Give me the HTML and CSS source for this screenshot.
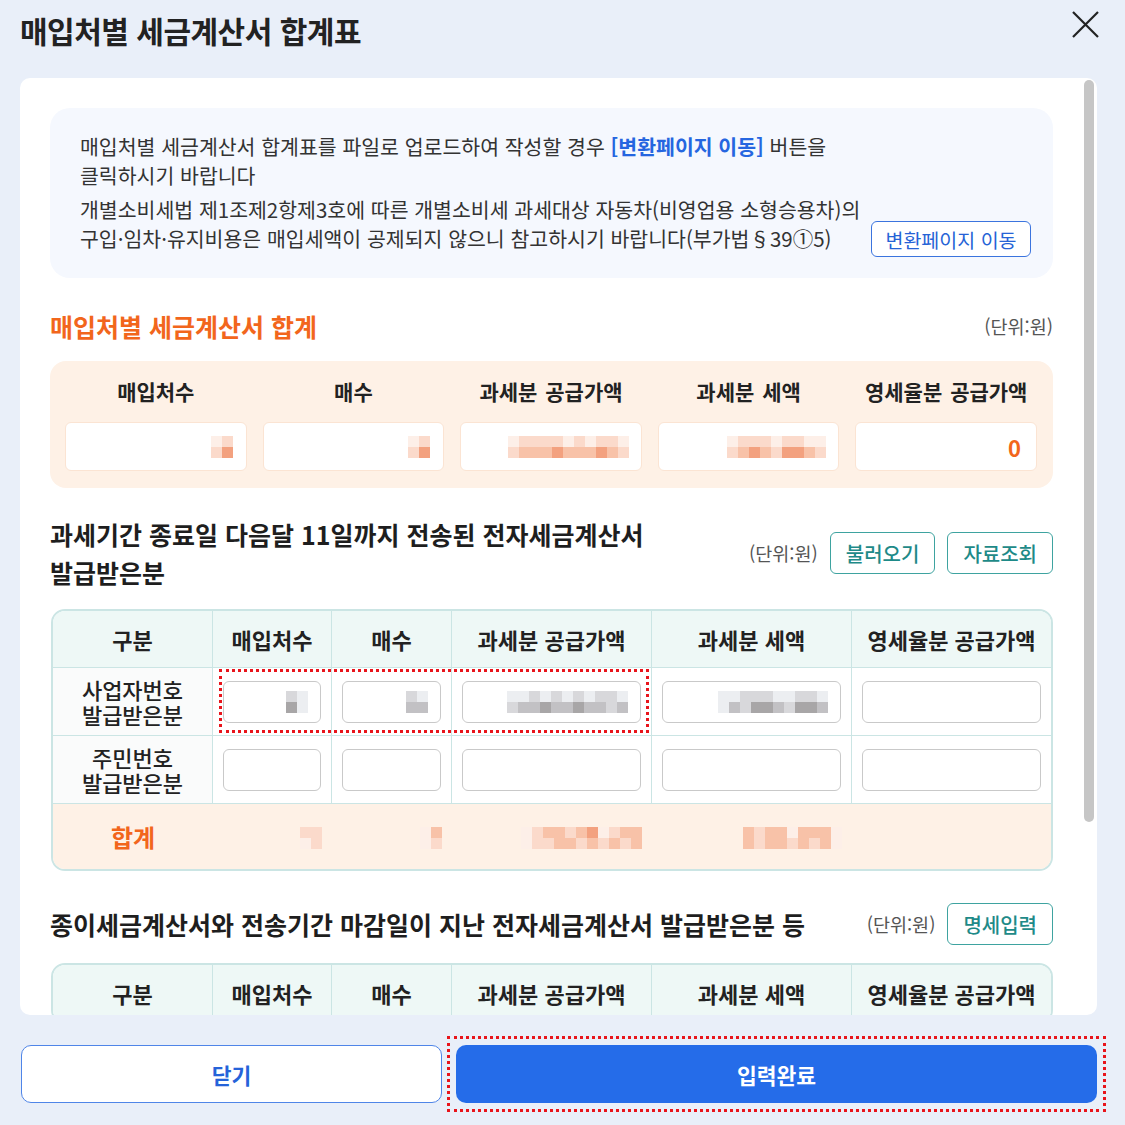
FILE: index.html
```html
<!DOCTYPE html>
<html lang="ko">
<head>
    <meta charset="UTF-8">
    <title>매입처별 세금계산서 합계표</title>
    <link rel="stylesheet" href="styles.css">
</head>
<body>
    <div class="popup">
        <div class="popup-header">
            <h1 class="popup-title">매입처별 세금계산서 합계표</h1>
            <svg class="close-icon" width="31" height="31" viewBox="0 0 31 31">
                <path d="M3 3 L28 28 M28 3 L3 28" stroke="#222" stroke-width="2.2" fill="none"/>
            </svg>
        </div>

        <div class="popup-body">
            <div class="scroll-area">
                <div class="notice">
                    <div class="notice-text">
                        <p>매입처별 세금계산서 합계표를 파일로 업로드하여 작성할 경우 <b class="link">[변환페이지 이동]</b> 버튼을<br>클릭하시기 바랍니다</p>
                        <p>개별소비세법 제1조제2항제3호에 따른 개별소비세 과세대상 자동차(비영업용 소형승용차)의<br>구입·임차·유지비용은 매입세액이 공제되지 않으니 참고하시기 바랍니다(부가법§39①5)</p>
                    </div>
                    <button class="btn-blue-line">변환페이지 이동</button>
                </div>

                <div class="section-head sum-head">
                    <h2 class="sum-title">매입처별 세금계산서 합계</h2>
                    <span class="unit">(단위:원)</span>
                </div>

                <div class="sum-box">
                    <div class="sum-label">매입처수</div>
                    <div class="sum-label">매수</div>
                    <div class="sum-label">과세분 공급가액</div>
                    <div class="sum-label">과세분 세액</div>
                    <div class="sum-label">영세율분 공급가액</div>

                    <div class="sum-field"><span class="mosaic"><i class="c1"></i><i class="c2"></i><i class="c2"></i><i class="c4"></i></span></div>
                    <div class="sum-field"><span class="mosaic"><i class="c1"></i><i class="c2"></i><i class="c2"></i><i class="c4"></i></span></div>
                    <div class="sum-field wide"><span class="mosaic"><i class="c1"></i><i class="c2"></i><i class="c2"></i><i class="c3"></i><i class="c2"></i><i class="c3"></i><i class="c2"></i><i class="c3"></i><i class="c2"></i><i class="c4"></i><i class="c1"></i><i class="c3"></i><i class="c2"></i><i class="c3"></i><i class="c1"></i><i class="c3"></i><i class="c2"></i><i class="c4"></i><i class="c2"></i><i class="c3"></i><i class="c1"></i><i class="c2"></i></span></div>
                    <div class="sum-field wide"><span class="mosaic"><i class="c1"></i><i class="c2"></i><i class="c2"></i><i class="c3"></i><i class="c2"></i><i class="c4"></i><i class="c2"></i><i class="c3"></i><i class="c1"></i><i class="c2"></i><i class="c2"></i><i class="c4"></i><i class="c2"></i><i class="c4"></i><i class="c1"></i><i class="c3"></i><i class="c1"></i><i class="c2"></i></span></div>
                    <div class="sum-field"><span class="zero">0</span></div>
                </div>

                <div class="section-head list-head">
                    <h2 class="list-title">과세기간 종료일 다음달 11일까지 전송된 전자세금계산서<br>발급받은분</h2>
                    <div class="head-tools">
                        <span class="unit">(단위:원)</span>
                        <button class="btn-teal">불러오기</button>
                        <button class="btn-teal">자료조회</button>
                    </div>
                </div>

                <div class="table-wrap">
                    <table class="grid-table">
                        <colgroup>
                            <col class="col-kind"><col class="col-count"><col class="col-count2"><col class="col-money"><col class="col-money"><col>
                        </colgroup>
                        <thead>
                            <tr>
                                <th>구분</th><th>매입처수</th><th>매수</th><th>과세분 공급가액</th><th>과세분 세액</th><th>영세율분 공급가액</th>
                            </tr>
                        </thead>
                        <tbody>
                            <tr>
                                <td class="row-label">사업자번호<br>발급받은분</td>
                                <td><div class="cell-field"><span class="mosaic"><i class="g2"></i><i class="g4"></i><i class="g1"></i><i class="g1"></i></span></div></td>
                                <td><div class="cell-field"><span class="mosaic"><i class="g2"></i><i class="g3"></i><i class="g1"></i><i class="g3"></i></span></div></td>
                                <td><div class="cell-field"><span class="mosaic"><i class="g1"></i><i class="g2"></i><i class="g1"></i><i class="g3"></i><i class="g2"></i><i class="g3"></i><i class="g1"></i><i class="g4"></i><i class="g2"></i><i class="g3"></i><i class="g1"></i><i class="g3"></i><i class="g2"></i><i class="g4"></i><i class="g1"></i><i class="g3"></i><i class="g2"></i><i class="g3"></i><i class="g2"></i><i class="g2"></i><i class="g1"></i><i class="g3"></i></span></div></td>
                                <td><div class="cell-field"><span class="mosaic"><i class="g1"></i><i class="g1"></i><i class="g1"></i><i class="g3"></i><i class="g2"></i><i class="g2"></i><i class="g2"></i><i class="g4"></i><i class="g2"></i><i class="g4"></i><i class="g1"></i><i class="g3"></i><i class="g1"></i><i class="g2"></i><i class="g2"></i><i class="g4"></i><i class="g2"></i><i class="g4"></i><i class="g1"></i><i class="g3"></i></span></div></td>
                                <td><div class="cell-field"></div></td>
                            </tr>
                            <tr>
                                <td class="row-label">주민번호<br>발급받은분</td>
                                <td><div class="cell-field"></div></td>
                                <td><div class="cell-field"></div></td>
                                <td><div class="cell-field"></div></td>
                                <td><div class="cell-field"></div></td>
                                <td><div class="cell-field"></div></td>
                            </tr>
                            <tr class="total">
                                <td class="total-label">합계</td>
                                <td><span class="mosaic"><i class="c2"></i><i class="c1"></i><i class="c2"></i><i class="c2"></i></span></td>
                                <td><span class="mosaic"><i class="c1"></i><i class="c1"></i><i class="c3"></i><i class="c2"></i></span></td>
                                <td><span class="mosaic"><i class="c1"></i><i class="c1"></i><i class="c2"></i><i class="c2"></i><i class="c3"></i><i class="c2"></i><i class="c3"></i><i class="c3"></i><i class="c2"></i><i class="c3"></i><i class="c3"></i><i class="c2"></i><i class="c4"></i><i class="c3"></i><i class="c1"></i><i class="c2"></i><i class="c2"></i><i class="c3"></i><i class="c3"></i><i class="c2"></i><i class="c3"></i><i class="c3"></i></span></td>
                                <td><span class="mosaic"><i class="c3"></i><i class="c3"></i><i class="c2"></i><i class="c2"></i><i class="c3"></i><i class="c3"></i><i class="c3"></i><i class="c3"></i><i class="c1"></i><i class="c2"></i><i class="c3"></i><i class="c3"></i><i class="c3"></i><i class="c2"></i><i class="c3"></i><i class="c3"></i><i class="c1"></i><i class="c1"></i></span></td>
                                <td></td>
                            </tr>
                        </tbody>
                    </table>
                    <div class="mark-box"></div>
                </div>

                <div class="section-head list-head single">
                    <h2 class="list-title">종이세금계산서와 전송기간 마감일이 지난 전자세금계산서 발급받은분 등</h2>
                    <div class="head-tools">
                        <span class="unit">(단위:원)</span>
                        <button class="btn-teal">명세입력</button>
                    </div>
                </div>

                <div class="table-wrap">
                    <table class="grid-table">
                        <colgroup>
                            <col class="col-kind"><col class="col-count"><col class="col-count2"><col class="col-money"><col class="col-money"><col>
                        </colgroup>
                        <thead>
                            <tr>
                                <th>구분</th><th>매입처수</th><th>매수</th><th>과세분 공급가액</th><th>과세분 세액</th><th>영세율분 공급가액</th>
                            </tr>
                        </thead>
                    </table>
                </div>
            </div>
            <div class="scroll-thumb"></div>
        </div>

        <div class="popup-footer">
            <button class="btn-close">닫기</button>
            <div class="submit-mark">
                <button class="btn-submit">입력완료</button>
            </div>
        </div>
    </div>
</body>
</html>
```

FILE: styles.css
```css
* {
    box-sizing: border-box;
}
body {
    margin: 0;
    background-color: #e9eff9;
    font-family: "Noto Sans CJK KR", "Noto Sans", sans-serif;
    color: #222;
}
button {
    font-family: inherit;
    cursor: pointer;
}
.popup {
    width: 1125px;
    height: 1125px;
}
.popup-header {
    height: 78px;
    display: flex;
    justify-content: space-between;
    align-items: flex-start;
    padding: 10px 24px 0 20px;
}
.popup-title {
    margin: 0;
    font-size: 30px;
    font-weight: 700;
    line-height: 40px;
    letter-spacing: -0.5px;
}
.close-icon {
    margin-top: -1px;
}
.popup-body {
    margin: 0 28px 0 20px;
    height: 937px;
    background-color: #fff;
    border-radius: 10px;
    overflow: hidden;
    position: relative;
}
.scroll-area {
    padding: 30px 44px 0 30px;
}
.scroll-thumb {
    position: absolute;
    top: 2px;
    right: 3px;
    width: 10px;
    height: 742px;
    border-radius: 5px;
    background-color: #c6c6c6;
}

/* notice */
.notice {
    display: flex;
    align-items: flex-end;
    gap: 4px;
    padding: 24px 22px 21px 30px;
    background-color: #f5f8fe;
    border-radius: 20px;
    font-size: 20.5px;
    line-height: 28.5px;
    color: #333;
}
.notice-text {
    flex: 1;
    padding-bottom: 5px;
    white-space: nowrap;
}
.notice p {
    margin: 0;
}
.notice p + p {
    margin-top: 6px;
}
.link {
    color: #2566e0;
    font-weight: 600;
}
.btn-blue-line {
    flex-shrink: 0;
    width: 160px;
    height: 36px;
    border: 1.5px solid #3b74de;
    border-radius: 6px;
    background-color: #fff;
    color: #2663d6;
    font-size: 19.5px;
    padding: 0;
}

/* section heads */
.section-head {
    display: flex;
    justify-content: space-between;
    align-items: center;
}
.sum-head {
    margin-top: 31px;
}
.sum-title {
    margin: 0;
    color: #f2661c;
    font-size: 25px;
    font-weight: 700;
    line-height: 34px;
}
.unit {
    font-size: 18.5px;
    color: #555;
}
.list-head {
    margin-top: 27px;
}
.list-head.single {
    margin-top: 32px;
}
.list-title {
    margin: 0;
    font-size: 25px;
    font-weight: 700;
    line-height: 38px;
    color: #1e1e1e;
}
.head-tools {
    display: flex;
    align-items: center;
    gap: 12px;
}
.btn-teal {
    height: 42px;
    padding: 0 15px;
    border: 1.5px solid #3ea3a0;
    border-radius: 6px;
    background-color: #fff;
    color: #1e8a88;
    font-size: 20px;
    font-weight: 500;
}

/* summary box */
.sum-box {
    margin-top: 18px;
    display: grid;
    grid-template-columns: repeat(5, 1fr);
    gap: 16px;
    padding: 15px 16px 17px 15px;
    background-color: #fef1e6;
    border-radius: 16px;
}
.sum-label {
    text-align: center;
    font-size: 21px;
    font-weight: 600;
    line-height: 30px;
    word-spacing: 2px;
}
.sum-field {
    height: 49px;
    display: flex;
    align-items: center;
    justify-content: flex-end;
    padding-right: 13px;
    background-color: #fff;
    border: 1px solid #fbe4d3;
    border-radius: 6px;
}
.sum-field.wide {
    padding-right: 12px;
}
.zero {
    color: #f2661c;
    font-size: 22px;
    font-weight: 700;
    padding-right: 2px;
}

/* blurred amounts */
.mosaic {
    display: inline-grid;
    grid-auto-flow: column;
    grid-template-rows: repeat(2, 11px);
    grid-auto-columns: 11px;
    vertical-align: middle;
}
.mosaic i {
    display: block;
}
.c1 { background-color: #fdefe8; }
.c2 { background-color: #fbdacb; }
.c3 { background-color: #f8c2a8; }
.c4 { background-color: #f3a17f; }
.g1 { background-color: #eceef1; }
.g2 { background-color: #d8d8db; }
.g3 { background-color: #c2c1c4; }
.g4 { background-color: #a8a6a7; }

/* tables */
.table-wrap {
    position: relative;
    margin-top: 18px;
}
.grid-table {
    width: 1002px;
    margin-left: 1px;
    table-layout: fixed;
    border-collapse: separate;
    border-spacing: 0;
    border: 2px solid #cbe5e4;
    border-radius: 14px;
    overflow: hidden;
}
.col-kind { width: 160px; }
.col-count { width: 119px; }
.col-count2 { width: 120px; }
.col-money { width: 200px; }
.grid-table th {
    height: 57px;
    background-color: #eef8f6;
    font-size: 22px;
    font-weight: 600;
    color: #222;
    border-right: 1px solid #cbe5e4;
    border-bottom: 1px solid #cbe5e4;
    padding: 0;
}
.grid-table td {
    height: 68px;
    padding: 0 10px;
    border-right: 1px solid #cbe5e4;
    border-bottom: 1px solid #cbe5e4;
    text-align: right;
}
.grid-table th:last-child,
.grid-table td:last-child {
    border-right: none;
}
.grid-table .row-label {
    background-color: #fafbfb;
    text-align: center;
    font-size: 22px;
    line-height: 25px;
    font-weight: 500;
    color: #222;
    padding: 0;
}
.cell-field {
    height: 42px;
    display: flex;
    align-items: center;
    justify-content: flex-end;
    padding-right: 12px;
    background-color: #fff;
    border: 1px solid #c9c9c9;
    border-radius: 6px;
}
.grid-table .total td {
    height: 65px;
    background-color: #fef1e6;
    border-right: none;
    border-bottom: none;
    padding-right: 10px;
}
.grid-table .total .total-label {
    text-align: center;
    color: #f2661c;
    font-size: 24px;
    font-weight: 700;
    padding: 0;
}
.mark-box {
    position: absolute;
    left: 169px;
    top: 60px;
    width: 430px;
    height: 64px;
    border: 3px dotted #e8141b;
    pointer-events: none;
}

/* footer */
.popup-footer {
    display: grid;
    grid-template-columns: 421px 1fr;
    gap: 14px;
    padding: 30px 28px 0 21px;
}
.btn-close {
    height: 58px;
    border: 1.5px solid #4f85e8;
    border-radius: 10px;
    background-color: #fff;
    color: #2563d9;
    font-size: 21.5px;
    font-weight: 700;
}
.submit-mark {
    margin: -9px;
    padding: 6px;
    border: 3px dotted #e8141b;
}
.btn-submit {
    display: block;
    width: 100%;
    height: 58px;
    border: none;
    border-radius: 10px;
    background-color: #256ce9;
    color: #fff;
    font-size: 21.5px;
    font-weight: 700;
}
```
